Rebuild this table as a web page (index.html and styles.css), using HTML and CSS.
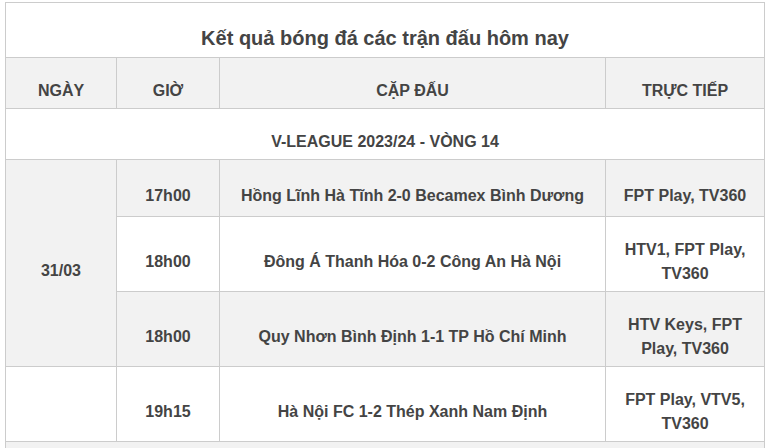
FILE: index.html
```html
<!DOCTYPE html>
<html lang="vi">
<head>
<meta charset="utf-8">
<title>Kết quả bóng đá</title>
<link rel="stylesheet" href="styles.css">
</head>
<body>
<div class="wrap">
<table class="results">
  <colgroup>
    <col class="c-date">
    <col class="c-time">
    <col class="c-match">
    <col class="c-tv">
  </colgroup>
  <tr class="r-title"><td colspan="4" class="title">Kết quả bóng đá các trận đấu hôm nay</td></tr>
  <tr class="r-head gray"><td>NGÀY</td><td>GIỜ</td><td>CẶP ĐẤU</td><td>TRỰC TIẾP</td></tr>
  <tr class="r-league"><td colspan="4">V-LEAGUE 2023/24 - VÒNG 14</td></tr>
  <tr class="r-one gray">
    <td rowspan="3">31/03</td>
    <td>17h00</td>
    <td>Hồng Lĩnh Hà Tĩnh 2-0 Becamex Bình Dương</td>
    <td>FPT Play, TV360</td>
  </tr>
  <tr class="r-two">
    <td>18h00</td>
    <td>Đông Á Thanh Hóa 0-2 Công An Hà Nội</td>
    <td>HTV1, FPT Play, TV360</td>
  </tr>
  <tr class="r-two gray">
    <td>18h00</td>
    <td>Quy Nhơn Bình Định 1-1 TP Hồ Chí Minh</td>
    <td>HTV Keys, FPT Play, TV360</td>
  </tr>
  <tr class="r-two">
    <td></td>
    <td>19h15</td>
    <td>Hà Nội FC 1-2 Thép Xanh Nam Định</td>
    <td>FPT Play, VTV5, TV360</td>
  </tr>
  <tr class="r-one gray"><td colspan="4"></td></tr>
</table>
</div>
</body>
</html>
```
FILE: styles.css
```css
html, body {
  margin: 0;
  padding: 0;
  background: #fff;
}
.wrap {
  padding: 2px 3px 0 5px;
}
.results {
  width: 759px;
  border-collapse: collapse;
  table-layout: fixed;
  font-family: "Liberation Sans", Arial, sans-serif;
  font-weight: bold;
  font-size: 16px;
  line-height: 23px;
  color: #444;
}
.c-date { width: 111px; }
.c-time { width: 103px; }
.c-match { width: 386px; }
.c-tv { width: 159px; }
.results td {
  border: 1px solid #ccc;
  text-align: center;
  vertical-align: middle;
  padding: 14px 6px 0;
  box-sizing: border-box;
}
.gray td {
  background: #f2f2f2;
}
.r-title { height: 55px; }
.results td.title {
  font-size: 20px;
  padding-top: 17px;
}
.r-head { height: 51px; }
.r-league { height: 51px; }
.r-one { height: 57px; }
.r-two { height: 75px; }
.r-two td {
  line-height: 24px;
  padding-top: 16px;
}
```
